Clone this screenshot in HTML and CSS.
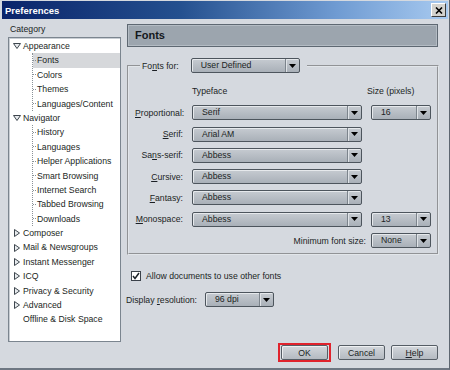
FILE: index.html
```html
<!DOCTYPE html>
<html lang="en">
<head>
    <meta charset="UTF-8">
    <title>Preferences</title>
    <link rel="stylesheet" href="styles.css">
</head>
<body>

<div class="window">
    <div class="titlebar">
        <span class="title">Preferences</span>
        <span class="close">
            <svg width="8" height="7" viewBox="0 0 8 7"><path d="M1 0.5 L7 6.5 M7 0.5 L1 6.5" stroke="#000" stroke-width="1.6"/></svg>
        </span>
    </div>

    <div class="main">
        <div class="side">
            <div class="side-label">Category</div>
            <div class="tree">
                <div class="row"><svg class="twisty" width="8" height="6" viewBox="0 0 8 6"><path d="M0.5 0.5 H7.5 L4 5.5 Z" fill="#e8ebee" stroke="#3e464e"/></svg>Appearance</div>
                <div class="children">
                    <div class="child selected">Fonts</div>
                    <div class="child">Colors</div>
                    <div class="child">Themes</div>
                    <div class="child">Languages/Content</div>
                </div>
                <div class="row"><svg class="twisty" width="8" height="6" viewBox="0 0 8 6"><path d="M0.5 0.5 H7.5 L4 5.5 Z" fill="#e8ebee" stroke="#3e464e"/></svg>Navigator</div>
                <div class="children">
                    <div class="child">History</div>
                    <div class="child">Languages</div>
                    <div class="child">Helper Applications</div>
                    <div class="child">Smart Browsing</div>
                    <div class="child">Internet Search</div>
                    <div class="child">Tabbed Browsing</div>
                    <div class="child">Downloads</div>
                </div>
                <div class="row"><svg class="twisty closed" width="6" height="8" viewBox="0 0 6 8"><path d="M0.5 0.5 V7.5 L5.5 4 Z" fill="#e8ebee" stroke="#3e464e"/></svg>Composer</div>
                <div class="row"><svg class="twisty closed" width="6" height="8" viewBox="0 0 6 8"><path d="M0.5 0.5 V7.5 L5.5 4 Z" fill="#e8ebee" stroke="#3e464e"/></svg>Mail &amp; Newsgroups</div>
                <div class="row"><svg class="twisty closed" width="6" height="8" viewBox="0 0 6 8"><path d="M0.5 0.5 V7.5 L5.5 4 Z" fill="#e8ebee" stroke="#3e464e"/></svg>Instant Messenger</div>
                <div class="row"><svg class="twisty closed" width="6" height="8" viewBox="0 0 6 8"><path d="M0.5 0.5 V7.5 L5.5 4 Z" fill="#e8ebee" stroke="#3e464e"/></svg>ICQ</div>
                <div class="row"><svg class="twisty closed" width="6" height="8" viewBox="0 0 6 8"><path d="M0.5 0.5 V7.5 L5.5 4 Z" fill="#e8ebee" stroke="#3e464e"/></svg>Privacy &amp; Security</div>
                <div class="row"><svg class="twisty closed" width="6" height="8" viewBox="0 0 6 8"><path d="M0.5 0.5 V7.5 L5.5 4 Z" fill="#e8ebee" stroke="#3e464e"/></svg>Advanced</div>
                <div class="row leaf">Offline &amp; Disk Space</div>
            </div>
        </div>

        <div class="panel">
            <div class="panel-title">Fonts</div>

            <fieldset class="group">
                <legend class="legend">
                    <span>Fo<u>n</u>ts for:</span>
                    <span class="select for-select"><span class="select-text">User Defined</span><span class="select-btn"><svg width="7" height="4" viewBox="0 0 7 4"><path d="M0 0 H7 L3.5 4 Z" fill="#000"/></svg></span></span>
                </legend>

                <div class="font-grid">
                    <span></span>
                    <span class="col-head">Typeface</span>
                    <span class="col-head size-head">Size (pixels)</span>

                    <label class="lbl"><u>P</u>roportional:</label>
                    <span class="select"><span class="select-text">Serif</span><span class="select-btn"><svg width="7" height="4" viewBox="0 0 7 4"><path d="M0 0 H7 L3.5 4 Z" fill="#000"/></svg></span></span>
                    <span class="select"><span class="select-text">16</span><span class="select-btn"><svg width="7" height="4" viewBox="0 0 7 4"><path d="M0 0 H7 L3.5 4 Z" fill="#000"/></svg></span></span>

                    <label class="lbl"><u>S</u>erif:</label>
                    <span class="select"><span class="select-text">Arial AM</span><span class="select-btn"><svg width="7" height="4" viewBox="0 0 7 4"><path d="M0 0 H7 L3.5 4 Z" fill="#000"/></svg></span></span>
                    <span></span>

                    <label class="lbl">Sa<u>n</u>s-serif:</label>
                    <span class="select"><span class="select-text">Abbess</span><span class="select-btn"><svg width="7" height="4" viewBox="0 0 7 4"><path d="M0 0 H7 L3.5 4 Z" fill="#000"/></svg></span></span>
                    <span></span>

                    <label class="lbl"><u>C</u>ursive:</label>
                    <span class="select"><span class="select-text">Abbess</span><span class="select-btn"><svg width="7" height="4" viewBox="0 0 7 4"><path d="M0 0 H7 L3.5 4 Z" fill="#000"/></svg></span></span>
                    <span></span>

                    <label class="lbl"><u>F</u>antasy:</label>
                    <span class="select"><span class="select-text">Abbess</span><span class="select-btn"><svg width="7" height="4" viewBox="0 0 7 4"><path d="M0 0 H7 L3.5 4 Z" fill="#000"/></svg></span></span>
                    <span></span>

                    <label class="lbl"><u>M</u>onospace:</label>
                    <span class="select"><span class="select-text">Abbess</span><span class="select-btn"><svg width="7" height="4" viewBox="0 0 7 4"><path d="M0 0 H7 L3.5 4 Z" fill="#000"/></svg></span></span>
                    <span class="select"><span class="select-text">13</span><span class="select-btn"><svg width="7" height="4" viewBox="0 0 7 4"><path d="M0 0 H7 L3.5 4 Z" fill="#000"/></svg></span></span>

                    <label class="lbl min-lbl">Minimum font size:</label>
                    <span class="select"><span class="select-text">None</span><span class="select-btn"><svg width="7" height="4" viewBox="0 0 7 4"><path d="M0 0 H7 L3.5 4 Z" fill="#000"/></svg></span></span>
                </div>
            </fieldset>

            <div class="check-row">
                <span class="checkbox"><svg width="8" height="8" viewBox="0 0 8 8"><path d="M1 4 L3 6.5 L7 1" fill="none" stroke="#1d2329" stroke-width="1.5"/></svg></span>
                <span>Allow documents to use other fonts</span>
            </div>

            <div class="res-row">
                <span>Display <u>r</u>esolution:</span>
                <span class="select res-select"><span class="select-text">96 dpi</span><span class="select-btn"><svg width="7" height="4" viewBox="0 0 7 4"><path d="M0 0 H7 L3.5 4 Z" fill="#000"/></svg></span></span>
            </div>

            <div class="buttons">
                <span class="highlight"><button class="btn">OK</button></span>
                <button class="btn">Cancel</button>
                <button class="btn"><u>H</u>elp</button>
            </div>
        </div>
    </div>
</div>

</body>
</html>
```

FILE: styles.css
```css
* {
    box-sizing: border-box;
}
body {
    margin: 0;
    font-family: "Liberation Sans", Arial, sans-serif;
    font-size: 8.7px;
    color: #1b1f24;
    background: #d5d9df;
}
u {
    text-decoration-thickness: 1px;
    text-underline-offset: 1px;
}
.window {
    width: 450px;
    height: 370px;
    display: flex;
    flex-direction: column;
    background: #d5d9df;
    border-right: 1px solid #5d6670;
    border-bottom: 2px solid #6e7782;
}
.titlebar {
    height: 18px;
    margin: 1px 1px 0 2px;
    padding: 0 2px 0 3px;
    display: flex;
    align-items: center;
    justify-content: space-between;
    background: linear-gradient(to right, #0a246a 0%, #24508f 40%, #6f9bd2 75%, #a8caf0 100%);
}
.title {
    color: #fff;
    font-weight: bold;
    font-size: 9.5px;
}
.close {
    width: 15px;
    height: 14px;
    display: flex;
    align-items: center;
    justify-content: center;
    background: #d4d3cf;
    border: 1px solid;
    border-color: #fff #3c3c3c #3c3c3c #fff;
}
.main {
    flex: 1;
    display: flex;
}

/* category tree */
.side {
    width: 123px;
    padding: 3px 0 0 8px;
}
.side-label {
    line-height: 14px;
    padding-left: 2px;
}
.tree {
    margin-top: 1px;
    width: 113px;
    height: 305px;
    padding-top: 1px;
    background: #fff;
    border: 1px solid #7b858f;
    box-shadow: inset 1px 1px 0 #c9ced4;
    overflow: hidden;
}
.row {
    height: 14.4px;
    line-height: 14.4px;
    padding-left: 4px;
    display: flex;
    align-items: center;
    white-space: nowrap;
}
.twisty {
    margin-right: 2px;
    flex: none;
}
.twisty.closed {
    margin-left: 1px;
    margin-right: 3px;
}
.row.leaf {
    padding-left: 14px;
}
.children {
    margin-left: 23px;
    border-left: 1px dotted #8a9298;
}
.child {
    height: 14.4px;
    line-height: 14.4px;
    white-space: nowrap;
    display: flex;
    align-items: center;
}
.child::before {
    content: "";
    width: 3px;
    margin-right: 1px;
    border-top: 1px dotted #8a9298;
}
.child.selected {
    background: #d6d8db;
}

/* right panel */
.panel {
    flex: 1;
    display: flex;
    flex-direction: column;
    padding: 5px 11px 6px 5px;
}
.panel-title {
    height: 23px;
    line-height: 21px;
    padding-left: 7px;
    font-size: 11px;
    font-weight: bold;
    color: #14181c;
    background: #9ca5ae;
    border: 1px solid #5e6872;
    box-shadow: inset 0 0 0 1px #b3bbc3;
}
.group {
    margin: 11px -1px 0 0;
    padding: 11px 6px 5px 6px;
    border: 2px groove #e2e6ea;
}
.legend {
    margin-left: 5px;
    padding: 0 7px 0 2px;
    display: flex;
    align-items: center;
    gap: 12px;
}
.font-grid {
    display: grid;
    grid-template-columns: 48px 170px 60px;
    column-gap: 9px;
    row-gap: 6.3px;
    align-items: center;
}
.col-head {
    line-height: 15px;
}
.size-head {
    margin-left: -4px;
}
.lbl {
    text-align: right;
    white-space: nowrap;
}
.min-lbl {
    grid-column: 1 / 3;
    margin-right: -4px;
}

/* dropdowns */
.select {
    height: 15px;
    display: flex;
    border: 1px solid #4d555d;
    border-radius: 2px;
    background: linear-gradient(#c6cbd1, #a9b0b8);
    box-shadow: inset 1px 1px 0 #e6e9ec;
}
.select-text {
    flex: 1;
    padding-left: 9px;
    line-height: 13px;
    white-space: nowrap;
}
.select-btn {
    width: 14px;
    display: flex;
    align-items: center;
    justify-content: center;
    border-left: 1px solid #7c848c;
    box-shadow: inset 1px 0 0 #dfe3e7;
}
.for-select {
    width: 109px;
}
.res-select {
    width: 69px;
}

.check-row {
    margin: 14px 0 0 4px;
    height: 14px;
    display: flex;
    align-items: center;
    gap: 5px;
}
.checkbox {
    width: 10px;
    height: 10px;
    display: flex;
    align-items: center;
    justify-content: center;
    background: #fff;
    border: 1px solid #3b424a;
}
.res-row {
    margin: 9px 0 0 -1px;
    display: flex;
    align-items: center;
    gap: 8px;
}

.buttons {
    margin-top: auto;
    display: flex;
    align-items: center;
    justify-content: flex-end;
    gap: 6px;
}
.highlight {
    display: flex;
    padding: 0 1px;
    border: 2px solid #e0232d;
    margin-right: 1px;
}
.btn {
    width: 47px;
    height: 15px;
    padding: 0;
    font: inherit;
    color: #1b1f24;
    border: 1px solid #555d65;
    border-radius: 2px;
    background: linear-gradient(#d3d7dc, #b4bac1);
    box-shadow: inset 1px 1px 0 #eef0f2;
}
```
